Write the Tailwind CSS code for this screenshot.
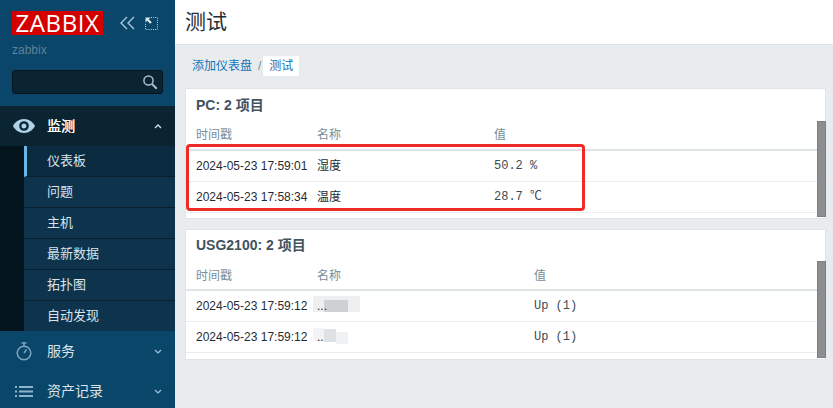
<!DOCTYPE html>
<html lang="zh">
<head>
    <meta charset="UTF-8">
    <title>测试</title>
    <script src="https://cdn.jsdelivr.net/npm/@tailwindcss/browser@4"></script>
</head>
<body class="w-[833px] h-[408px] overflow-hidden flex bg-[#e9ecef] text-[12px] text-[#1f2c33] font-['Liberation_Sans','Noto_Sans_CJK_SC',sans-serif]">

    <!-- Sidebar -->
    <aside class="w-[175px] h-[408px] shrink-0 bg-[#0a466a] flex flex-col overflow-hidden">
        <div class="h-[106px] shrink-0 pl-[12px] pt-[11px]">
            <div class="flex items-center">
                <div class="w-[91px] h-[24px] bg-[#d40000] text-white text-[24px] leading-[24px] tracking-[0.6px] text-center font-['Open_Sans','Liberation_Sans',sans-serif]">ZABBIX</div>
                <svg class="ml-[17px]" width="15" height="14" viewBox="0 0 15 14" fill="none" stroke="#a9c7dc" stroke-width="1.4"><path d="M7 1 1 7l6 6M14 1 8 7l6 6"/></svg>
                <svg class="ml-[10px]" width="13" height="13" viewBox="0 0 13 13" fill="none"><path d="M6 .5h6.500v12H.5V6" stroke="#c5d8e6" stroke-dasharray="1 1.200"/><path d="M.5.5h5L3.800 2.200l3 3L5.200 6.800l-3-3L.5 5.500z" fill="#dbe7f0"/></svg>
            </div>
            <div class="mt-[8px] text-[12px] leading-[14px] text-[#5f8199]">zabbix</div>
            <div class="mt-[13px] w-[151px] h-[24px] rounded-[3px] border border-[#04141e] bg-[#0a2432] flex items-center justify-end pr-[4px]">
                <svg width="16" height="16" viewBox="0 0 16 16" fill="none" stroke="#a7bfcf"><circle cx="6.500" cy="6.500" r="4.600" stroke-width="1.500"/><path d="m10 10 4.800 4.800" stroke-width="2"/></svg>
            </div>
        </div>

        <!-- Monitoring -->
        <div class="h-[225px] shrink-0 bg-[#0a2432] flex flex-col">
            <div class="h-[40px] shrink-0 flex items-center text-white text-[14px]">
                <svg class="ml-[13px]" width="22" height="14" viewBox="0 0 22 14"><path fill-rule="evenodd" fill="#b0d2e8" d="M11 0C6 0 2 3 0 7c2 4 6 7 11 7s9-3 11-7c-2-4-6-7-11-7zm0 2.200a4.800 4.800 0 1 1 0 9.600 4.800 4.800 0 0 1 0-9.600zm0 2.300a2.500 2.500 0 1 0 0 5 2.500 2.500 0 0 0 0-5z"/></svg>
                <span class="ml-[12px] [text-shadow:0.3px_0_0_white]">监测</span>
                <svg class="ml-auto mr-[13px]" width="8" height="5" viewBox="0 0 8 5" fill="none" stroke="#d5e2ea" stroke-width="1.300"><path d="m1 4 3-3 3 3"/></svg>
            </div>
            <div class="flex-1 flex bg-[#04141c]">
                <ul class="ml-[24px] flex-1 text-[13px] text-[#d8e3ea]">
                    <li class="h-[31px] bg-[#0b2b41] border-l-[3px] border-l-[#69b6ea] border-b border-b-[#06202f] pl-[20px] leading-[29px]">仪表板</li>
                    <li class="h-[31px] bg-[#0e334d] border-b border-b-[#06202f] pl-[23px] leading-[29px]">问题</li>
                    <li class="h-[31px] bg-[#0e334d] border-b border-b-[#06202f] pl-[23px] leading-[29px]">主机</li>
                    <li class="h-[31px] bg-[#0e334d] border-b border-b-[#06202f] pl-[23px] leading-[29px]">最新数据</li>
                    <li class="h-[31px] bg-[#0e334d] border-b border-b-[#06202f] pl-[23px] leading-[29px]">拓扑图</li>
                    <li class="h-[30px] bg-[#0e334d] pl-[23px] leading-[29px]">自动发现</li>
                </ul>
            </div>
        </div>

        <!-- Collapsed sections -->
        <div class="h-[40px] shrink-0 flex items-center text-[14px] text-[#d8e3ea]">
            <svg class="ml-[16px]" width="16" height="19" viewBox="0 0 16 19" fill="none" stroke="#7da6c0" stroke-width="1.500"><circle cx="8" cy="11" r="6.800"/><path d="M5.500 1h5M8 1v3M8 11l2.500-3.500"/></svg>
            <span class="ml-[15px]">服务</span>
            <svg class="ml-auto mr-[13px]" width="8" height="5" viewBox="0 0 8 5" fill="none" stroke="#a9c2d2" stroke-width="1.200"><path d="m1 1 3 3 3-3"/></svg>
        </div>
        <div class="h-[40px] shrink-0 flex items-center text-[14px] text-[#d8e3ea]">
            <svg class="ml-[15px]" width="18" height="11" viewBox="0 0 18 11" fill="#8fb3ca"><path d="M0 0h2v2H0zM4 0h14v2H4zM0 4.500h2v2H0zM4 4.500h14v2H4zM0 9h2v2H0zM4 9h14v2H4z"/></svg>
            <span class="ml-[14px]">资产记录</span>
            <svg class="ml-auto mr-[13px]" width="8" height="5" viewBox="0 0 8 5" fill="none" stroke="#a9c2d2" stroke-width="1.200"><path d="m1 1 3 3 3-3"/></svg>
        </div>
    </aside>

    <!-- Main -->
    <main class="relative flex-1 min-w-0">
        <header class="h-[45px] bg-white border-b border-[#dfe4e7] pl-[10px] text-[21px] leading-[44px] text-[#1f2c33]">测试</header>

        <nav class="h-[43px] pl-[17px] pt-[10px] flex items-start text-[12px] text-[#0f75b8]">
            <span class="leading-[22px]">添加仪表盘</span>
            <span class="ml-[6px] leading-[22px] text-[#768d99]">/</span>
            <span class="ml-[1px] h-[22px] px-[6px] bg-white border border-[#e6eaec] rounded-[2px] leading-[20px]">测试</span>
        </nav>

        <!-- PC panel -->
        <section class="relative mx-[10px] w-[641px] h-[131px] bg-white border border-[#dfe4e7] pl-[10px]">
            <h4 class="h-[32px] text-[14px] leading-[33px] font-bold text-[#41535f]">PC: 2 项目</h4>
            <div class="-ml-[10px]">
                <div class="grid grid-cols-[121px_177px_1fr] h-[30px] pl-[10px] items-center border-b-2 border-[#dfe4e7] text-[#768d99]">
                    <span>时间戳</span><span>名称</span><span>值</span>
                </div>
                <div class="grid grid-cols-[121px_177px_1fr] h-[31px] pl-[10px] items-center border-b border-[#ebeef0]">
                    <span>2024-05-23 17:59:01</span><span>湿度</span><span class="font-['Liberation_Mono',monospace] text-[12px] text-[#3c4b54]">50.2 %</span>
                </div>
                <div class="grid grid-cols-[121px_177px_1fr] h-[31px] pl-[10px] items-center border-b border-[#ebeef0]">
                    <span>2024-05-23 17:58:34</span><span>温度</span><span class="font-['Liberation_Mono','Noto_Sans_CJK_SC',monospace] text-[12px] text-[#3c4b54]">28.7 ℃</span>
                </div>
            </div>
            <div class="absolute -right-[1px] top-[32px] bottom-[1px] w-[9px] bg-[#8e8e8e] border border-[#7f7f7f]"></div>
        </section>

        <!-- USG2100 panel -->
        <section class="relative mt-[10px] mx-[10px] w-[641px] h-[131px] bg-white border border-[#dfe4e7] pl-[10px]">
            <h4 class="h-[32px] text-[14px] leading-[30px] font-bold text-[#41535f]">USG2100: 2 项目</h4>
            <div class="-ml-[10px]">
                <div class="grid grid-cols-[121px_217px_1fr] h-[29px] pl-[10px] items-center border-b-2 border-[#dfe4e7] text-[#768d99]">
                    <span>时间戳</span><span>名称</span><span>值</span>
                </div>
                <div class="grid grid-cols-[121px_217px_1fr] h-[31px] pl-[10px] items-center border-b border-[#ebeef0]">
                    <span>2024-05-23 17:59:12</span><span class="relative z-10">...</span><span class="font-['Liberation_Mono',monospace] text-[12px] text-[#3c4b54]">Up (1)</span>
                </div>
                <div class="grid grid-cols-[121px_217px_1fr] h-[31px] pl-[10px] items-center border-b border-[#ebeef0]">
                    <span>2024-05-23 17:59:12</span><span class="relative z-10">..</span><span class="font-['Liberation_Mono',monospace] text-[12px] text-[#3c4b54]">Up (1)</span>
                </div>
            </div>
            <div class="absolute -right-[1px] top-[31px] bottom-[1px] w-[9px] bg-[#8e8e8e] border border-[#7f7f7f]"></div>
            <!-- mosaic over the redacted names -->
            <div class="absolute left-[127px] top-[66px] w-[47px] h-[16px] bg-[#eeeff1]"></div>
            <div class="absolute left-[138px] top-[70px] w-[24px] h-[12px] bg-[#cfd0d2]"></div>
            <div class="absolute left-[127px] top-[98px] w-[11px] h-[13px] bg-[#f2f3f4]"></div>
            <div class="absolute left-[138px] top-[99px] w-[12px] h-[13px] bg-[#dfe2e4]"></div>
            <div class="absolute left-[150px] top-[102px] w-[12px] h-[12px] bg-[#f0f1f2]"></div>
        </section>

        <!-- Annotation over the first two rows -->
        <div class="absolute left-[11px] top-[144px] w-[399px] h-[67px] border-[3px] border-[#ee2c27] rounded-[4px]"></div>
    </main>
</body>
</html>
